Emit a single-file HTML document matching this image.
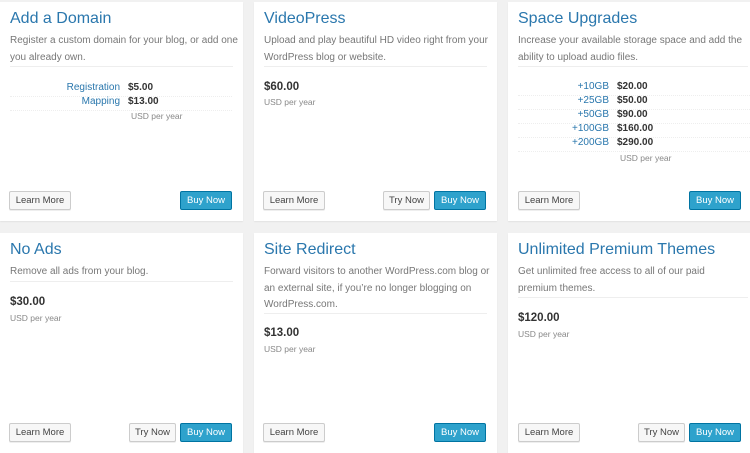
<!DOCTYPE html>
<html><head><style>
body{margin:0;width:750px;height:440px;background:#f1f1f1;overflow:hidden;position:relative;font-family:"Liberation Sans",sans-serif}
.c{position:absolute;background:#fff;box-shadow:0 1px 1px rgba(0,0,0,.06)}
.t{position:absolute;left:10px;top:8px;font-size:16px;color:#2a77ad;white-space:nowrap}
.d{position:absolute;left:10px;top:31px;width:232px;font-size:10px;line-height:16.5px;color:#777}
.hr{position:absolute;left:10px;right:10px;height:1px;background:#eee}
.p{position:absolute;left:10px;font-size:11.5px;font-weight:bold;color:#333}
.u{position:absolute;font-size:8.5px;color:#888}
.b{position:absolute;height:19px;line-height:18px;font-size:9.5px;border-radius:2px;text-align:center;box-sizing:border-box}
.g{background:#f7f7f7;border:1px solid #ccc;color:#444;box-shadow:0 1px 0 #eee}
.bl{background:#2ea2cc;border:1px solid #0074a2;color:#fff}
.r{position:absolute;left:10px;width:222px;height:14px;font-size:10px;border-bottom:1px dotted #eee}
.r .k{position:absolute;left:0;width:110px;text-align:right;color:#2a77ad}
.r .v{position:absolute;left:118px;font-weight:bold;color:#333}
.s .k{width:91px}.s .v{left:99px}
</style></head><body>
<div class="c" style="left:0;top:2px;width:243px;height:219px">
<div class="t">Add a Domain</div>
<div class="d">Register a custom domain for your blog, or add one you already own.</div>
<div class="hr" style="top:64px"></div>
<div class="r" style="top:80px"><span class="k">Registration</span><span class="v">$5.00</span></div>
<div class="r" style="top:94px"><span class="k">Mapping</span><span class="v">$13.00</span></div>
<div class="u" style="left:131px;top:109px">USD per year</div>
<div class="b g" style="left:9px;top:189px;width:62px">Learn More</div>
<div class="b bl" style="left:180px;top:189px;width:52px">Buy Now</div>
</div>
<div class="c" style="left:254px;top:2px;width:243px;height:219px">
<div class="t">VideoPress</div>
<div class="d">Upload and play beautiful HD video right from your WordPress blog or website.</div>
<div class="hr" style="top:64px"></div>
<div class="p" style="top:79px">$60.00</div>
<div class="u" style="left:10px;top:95px">USD per year</div>
<div class="b g" style="left:9px;top:189px;width:62px">Learn More</div>
<div class="b g" style="left:129px;top:189px;width:47px">Try Now</div>
<div class="b bl" style="left:180px;top:189px;width:52px">Buy Now</div>
</div>
<div class="c" style="left:508px;top:2px;width:250px;height:219px">
<div class="t">Space Upgrades</div>
<div class="d">Increase your available storage space and add the ability to upload audio files.</div>
<div class="hr" style="top:64px"></div>
<div class="r s" style="top:79px;width:232px"><span class="k">+10GB</span><span class="v">$20.00</span></div>
<div class="r s" style="top:93px;width:232px"><span class="k">+25GB</span><span class="v">$50.00</span></div>
<div class="r s" style="top:107px;width:232px"><span class="k">+50GB</span><span class="v">$90.00</span></div>
<div class="r s" style="top:121px;width:232px"><span class="k">+100GB</span><span class="v">$160.00</span></div>
<div class="r s" style="top:135px;width:232px"><span class="k">+200GB</span><span class="v">$290.00</span></div>
<div class="u" style="left:112px;top:151px">USD per year</div>
<div class="b g" style="left:10px;top:189px;width:62px">Learn More</div>
<div class="b bl" style="left:181px;top:189px;width:52px">Buy Now</div>
</div>
<div class="c" style="left:0;top:233px;width:243px;height:220px">
<div class="t">No Ads</div>
<div class="d">Remove all ads from your blog.</div>
<div class="hr" style="top:48px"></div>
<div class="p" style="top:63px">$30.00</div>
<div class="u" style="left:10px;top:80px">USD per year</div>
<div class="b g" style="left:9px;top:190px;width:62px">Learn More</div>
<div class="b g" style="left:129px;top:190px;width:47px">Try Now</div>
<div class="b bl" style="left:180px;top:190px;width:52px">Buy Now</div>
</div>
<div class="c" style="left:254px;top:233px;width:243px;height:220px">
<div class="t">Site Redirect</div>
<div class="d" style="width:226px">Forward visitors to another WordPress.com blog or an external site, if you’re no longer blogging on WordPress.com.</div>
<div class="hr" style="top:80px"></div>
<div class="p" style="top:94px">$13.00</div>
<div class="u" style="left:10px;top:111px">USD per year</div>
<div class="b g" style="left:9px;top:190px;width:62px">Learn More</div>
<div class="b bl" style="left:180px;top:190px;width:52px">Buy Now</div>
</div>
<div class="c" style="left:508px;top:233px;width:250px;height:220px">
<div class="t">Unlimited Premium Themes</div>
<div class="d" style="width:215px">Get unlimited free access to all of our paid premium themes.</div>
<div class="hr" style="top:64px"></div>
<div class="p" style="top:79px">$120.00</div>
<div class="u" style="left:10px;top:96px">USD per year</div>
<div class="b g" style="left:10px;top:190px;width:62px">Learn More</div>
<div class="b g" style="left:130px;top:190px;width:47px">Try Now</div>
<div class="b bl" style="left:181px;top:190px;width:52px">Buy Now</div>
</div>
</body></html>
